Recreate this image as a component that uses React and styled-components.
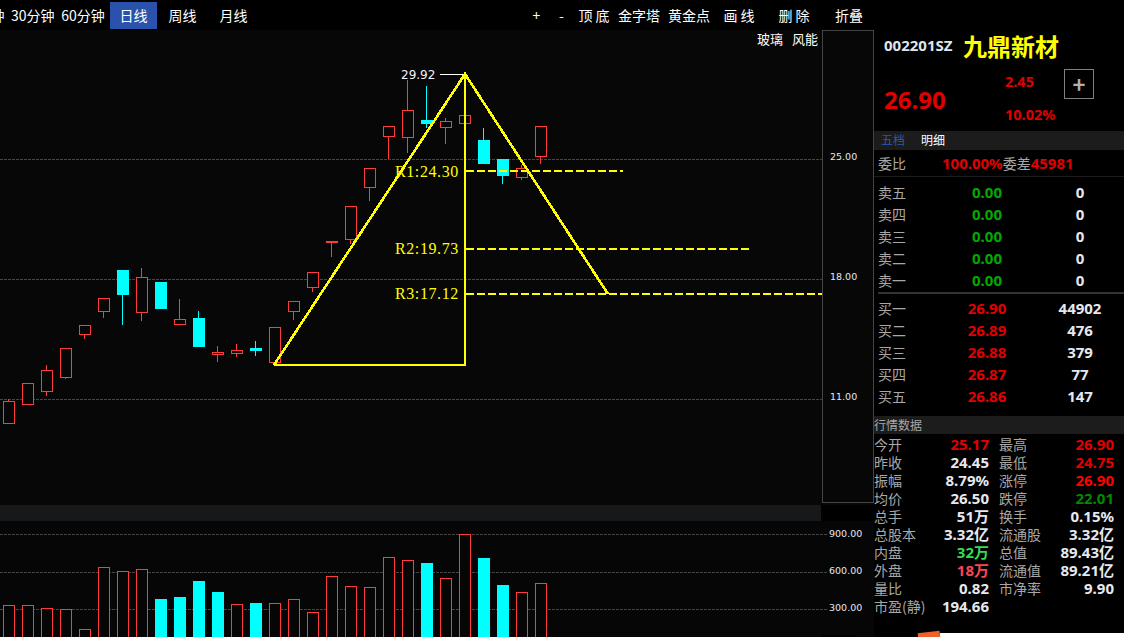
import styled, { createGlobalStyle } from "styled-components";

const RED = "#ff3b3b";
const CYAN = "#00ffff";
const YELLOW = "#ffff00";

// [up, bodyTop, bodyBottom, wickTop, wickBottom]
const candles = [
  [1, 401, 424, 399, 424],
  [1, 383, 405, 383, 405],
  [1, 370, 392, 365, 396],
  [1, 348, 378, 348, 379],
  [1, 325, 335, 325, 339],
  [1, 298, 312, 298, 318],
  [0, 270, 295, 270, 325],
  [1, 277, 313, 268, 321],
  [0, 282, 309, 282, 309],
  [1, 319, 325, 299, 325],
  [0, 318, 347, 311, 347],
  [1, 352, 355, 346, 362],
  [1, 350, 354, 344, 357],
  [0, 348, 351, 341, 356],
  [1, 327, 363, 327, 363],
  [1, 301, 312, 301, 320],
  [1, 272, 288, 272, 292],
  [1, 241, 243, 241, 257],
  [1, 206, 240, 206, 244],
  [1, 168, 188, 168, 201],
  [1, 126, 137, 126, 159],
  [1, 110, 138, 80, 153],
  [0, 120, 124, 86, 128],
  [1, 121, 128, 118, 144],
  [1, 115, 124, 115, 124],
  [0, 140, 164, 128, 164],
  [0, 159, 176, 159, 184],
  [1, 168, 178, 165, 180],
  [1, 126, 157, 126, 164],
];

// [up, top]
const volumes = [
  [1, 605], [1, 605], [1, 608], [1, 609], [1, 629], [1, 567], [1, 571], [1, 569],
  [0, 599], [0, 597], [0, 581], [0, 592], [1, 604], [0, 603], [1, 603], [1, 599],
  [1, 612], [1, 576], [1, 586], [1, 587], [1, 557], [1, 560], [0, 563], [1, 578],
  [1, 534], [0, 558], [0, 585], [1, 592], [1, 583],
];

const leftTools = [
  ["15分钟", 43, 7],
  ["30分钟", 43, 7],
  ["60分钟", 44, 5],
];
const rangeTools = [
  ["日线", 47, true],
  ["周线", 51],
  ["月线", 51],
];
const rightTools = [
  ["+", 25],
  ["-", 25],
  ["顶 底", 40],
  ["金字塔", 50],
  ["黄金点", 50],
  ["画 线", 50],
  ["删 除", 60],
  ["折叠", 50],
];

const asks = [["卖五"], ["卖四"], ["卖三"], ["卖二"], ["卖一"]];
const bids = [
  ["买一", "26.90", "44902"],
  ["买二", "26.89", "476"],
  ["买三", "26.88", "379"],
  ["买四", "26.87", "77"],
  ["买五", "26.86", "147"],
];

const W = "#e6e8f0";
const DR = "#e00000";
const stats = [
  ["今开", "25.17", DR, "最高", "26.90", DR],
  ["昨收", "24.45", W, "最低", "24.75", DR],
  ["振幅", "8.79%", W, "涨停", "26.90", "#ff0000"],
  ["均价", "26.50", W, "跌停", "22.01", "#008a00"],
  ["总手", "51万", W, "换手", "0.15%", W],
  ["总股本", "3.32亿", W, "流通股", "3.32亿", W],
  ["内盘", "32万", "#33dd55", "总值", "89.43亿", W],
  ["外盘", "18万", "#ff4455", "流通值", "89.21亿", W],
  ["量比", "0.82", W, "市净率", "9.90", W],
  ["市盈(静)", "194.66", W],
];

export default function App() {
  return (
    <>
      <GlobalStyle />
      <Page>
        <Main>
          <Toolbar>
            <ToolGroup>
              {leftTools.map(([label, w, gap], i) => (
                <ToolItem key={label} $w={w} $gap={gap} $first={i === 0}>{label}</ToolItem>
              ))}
              {rangeTools.map(([label, w, active]) => (
                <ToolItem key={label} $w={w} $active={active}>{label}</ToolItem>
              ))}
            </ToolGroup>
            <ToolGroup>
              {rightTools.map(([label, w]) => (
                <ToolItem key={label} $w={w}>{label}</ToolItem>
              ))}
            </ToolGroup>
          </Toolbar>

          <ChartRow>
            <Chart>
              <svg width="822" height="475" viewBox="0 30 822 475">
                {[159.5, 279.5, 399.5].map((y) => (
                  <line key={y} x1="0" x2="822" y1={y} y2={y} stroke="#444" strokeDasharray="3 1" />
                ))}
                {candles.map(([up, top, bottom, wickTop, wickBottom], i) => {
                  const x = 8.5 + 19 * i;
                  const color = up ? RED : CYAN;
                  return (
                    <g key={i}>
                      <line x1={x} x2={x} y1={wickTop} y2={wickBottom} stroke={color} />
                      {up ? (
                        <rect x={x - 5} y={top + 0.5} width="11" height={bottom - top - 1} fill="#070707" stroke={color} />
                      ) : (
                        <rect x={x - 5.5} y={top} width="12" height={bottom - top} fill={color} />
                      )}
                    </g>
                  );
                })}
                <line x1="440" x2="465" y1="74.5" y2="74.5" stroke="#fff" />
                <PriceMark x="401" y="79">29.92</PriceMark>
                <g stroke={YELLOW} fill="none" shapeRendering="crispEdges">
                  <path d="M274 365 L465 74 L608 294" strokeWidth="2.6" />
                  <path d="M274 365 H465 V74" strokeWidth="2" />
                  <path d="M466 171 H623 M466 249 H751 M466 294 H822" strokeWidth="2" strokeDasharray="8 3" />
                </g>
                <LevelText x="395" y="177">R1:24.30</LevelText>
                <LevelText x="395" y="254">R2:19.73</LevelText>
                <LevelText x="395" y="299">R3:17.12</LevelText>
              </svg>
              <Tags>
                <span>玻璃</span>
                <span>风能</span>
              </Tags>
            </Chart>
            <AxisBox>
              <AxisLabel $top={120}>25.00</AxisLabel>
              <AxisLabel $top={240}>18.00</AxisLabel>
              <AxisLabel $top={360}>11.00</AxisLabel>
            </AxisBox>
          </ChartRow>

          <Strip />

          <VolumePane>
            <svg width="874" height="116" viewBox="0 521 874 116">
              {[534.5, 572.5, 609.5].map((y) => (
                <line key={y} x1="0" x2="828" y1={y} y2={y} stroke="#444" strokeDasharray="3 1" />
              ))}
              {volumes.map(([up, top], i) => {
                const x = 8.5 + 19 * i;
                return up ? (
                  <rect key={i} x={x - 5} y={top + 0.5} width="11" height={660 - top} fill="#060606" stroke={RED} />
                ) : (
                  <rect key={i} x={x - 5.5} y={top} width="12" height={660 - top} fill={CYAN} />
                );
              })}
              <AxisText x="829" y="537">900.00</AxisText>
              <AxisText x="829" y="574">600.00</AxisText>
              <AxisText x="829" y="611">300.00</AxisText>
              <rect x="822" y="635" width="34" height="2" fill="#000" />
              <AxisText x="829" y="643.5">100%</AxisText>
            </svg>
          </VolumePane>
        </Main>

        <Side>
          <Header>
            <TitleRow>
              <Code>002201SZ</Code>
              <Name>九鼎新材</Name>
            </TitleRow>
            <QuoteRow>
              <Price>26.90</Price>
              <Change>
                <span>2.45</span>
                <span>10.02%</span>
              </Change>
              <PlusButton>+</PlusButton>
            </QuoteRow>
          </Header>

          <TabBar>
            <Tab $active>五档</Tab>
            <Tab>明细</Tab>
          </TabBar>

          <RatioRow>
            <Label>委比</Label>
            <RatioValue>100.00%</RatioValue>
            <Label>委差</Label>
            <RatioValue>45981</RatioValue>
          </RatioRow>

          <Book>
            {asks.map(([label]) => (
              <BookRow key={label}>
                <Label>{label}</Label>
                <Num $color="#00a800">0.00</Num>
                <Num $color={W}>0</Num>
              </BookRow>
            ))}
          </Book>

          <Book $divided>
            {bids.map(([label, price, vol]) => (
              <BookRow key={label}>
                <Label>{label}</Label>
                <Num $color={DR}>{price}</Num>
                <Num $color={W}>{vol}</Num>
              </BookRow>
            ))}
          </Book>

          <SectionBar>行情数据</SectionBar>

          <StatList>
            {stats.map(([a, av, ac, b, bv, bc]) => (
              <StatRow key={a}>
                <Stat>
                  <Label>{a}</Label>
                  <StatValue $color={ac}>{av}</StatValue>
                </Stat>
                {b && (
                  <Stat>
                    <Label>{b}</Label>
                    <StatValue $color={bc}>{bv}</StatValue>
                  </Stat>
                )}
              </StatRow>
            ))}
          </StatList>

          <AdEdge />
        </Side>
      </Page>
    </>
  );
}

const GlobalStyle = createGlobalStyle`
  html, body {
    margin: 0;
    padding: 0;
    background: #000;
  }
  * {
    box-sizing: border-box;
  }
  svg {
    display: block;
  }
`;

const CJK = `"Noto Sans CJK SC", "Noto Sans", sans-serif`;
const NUM = `"Noto Sans", "Noto Sans CJK SC", sans-serif`;

const Page = styled.div`
  display: flex;
  width: 1124px;
  height: 637px;
  overflow: hidden;
  font-family: ${CJK};
  background: #000;
`;

const Main = styled.div`
  width: 874px;
  display: flex;
  flex-direction: column;
  overflow: hidden;
`;

const Toolbar = styled.div`
  height: 30px;
  flex: none;
  display: flex;
  justify-content: space-between;
  background: #000;
`;

const ToolGroup = styled.div`
  display: flex;
  height: 27px;
  margin-top: 2px;
`;

const ToolItem = styled.div`
  flex: none;
  width: ${(p) => p.$w}px;
  margin-left: ${(p) => (p.$first ? "-39px" : 0)};
  margin-right: ${(p) => p.$gap || 0}px;
  line-height: 27px;
  text-align: center;
  white-space: nowrap;
  font-size: 14px;
  color: #fff;
  background: ${(p) => (p.$active ? "#2a52ad" : "transparent")};
`;

const ChartRow = styled.div`
  display: flex;
  height: 475px;
  flex: none;
  background: #070707;
`;

const Chart = styled.div`
  position: relative;
  width: 822px;
  flex: none;
`;

const Tags = styled.div`
  position: absolute;
  top: 0;
  right: 4px;
  display: flex;
  gap: 9px;
  font-size: 13px;
  line-height: 18px;
  color: #fff;
`;

const AxisBox = styled.div`
  position: relative;
  width: 52px;
  height: 473px;
  border: 1px solid #444;
`;

const AxisLabel = styled.span`
  position: absolute;
  left: 7px;
  top: ${(p) => p.$top}px;
  font-family: "DejaVu Sans", sans-serif;
  font-size: 9.5px;
  line-height: 12px;
  color: #e6e8f0;
`;

const PriceMark = styled.text`
  font-family: "DejaVu Sans", sans-serif;
  font-size: 12px;
  fill: #eef2ff;
`;

const LevelText = styled.text`
  font-family: "Liberation Serif", serif;
  font-size: 16px;
  letter-spacing: 0.6px;
  fill: ${YELLOW};
`;

const AxisText = styled.text`
  font-family: "DejaVu Sans", sans-serif;
  font-size: 9.5px;
  fill: #e6e8f0;
`;

const Strip = styled.div`
  height: 16px;
  flex: none;
  width: 821px;
  background: #16181a;
`;

const VolumePane = styled.div`
  height: 116px;
  flex: none;
  background: #060606;
`;

const Side = styled.div`
  width: 250px;
  flex: none;
  background: #000;
`;

const Header = styled.div`
  height: 131px;
  padding-top: 27px;
`;

const TitleRow = styled.div`
  display: flex;
  align-items: center;
  height: 36px;
  padding-left: 10px;
`;

const Code = styled.span`
  width: 79px;
  font-family: ${NUM};
  font-size: 15px;
  font-weight: 700;
  color: #dfe4ee;
`;

const Name = styled.span`
  font-size: 24px;
  font-weight: 700;
  color: ${YELLOW};
`;

const QuoteRow = styled.div`
  display: flex;
  padding-left: 10px;
  height: 68px;
`;

const Price = styled.span`
  width: 121px;
  padding-top: 20px;
  font-family: ${NUM};
  font-size: 24px;
  font-weight: 700;
  line-height: 34px;
  color: ${DR};
`;

const Change = styled.div`
  width: 59px;
  padding-top: 8px;
  display: flex;
  flex-direction: column;
  gap: 13px;
  font-family: ${NUM};
  font-size: 14.5px;
  font-weight: 700;
  line-height: 20px;
  color: ${DR};
`;

const PlusButton = styled.div`
  width: 30px;
  height: 30px;
  margin-top: 6px;
  border: 1px solid #808080;
  text-align: center;
  line-height: 26px;
  font-size: 22px;
  font-weight: 700;
  color: #b0b0b0;
`;

const TabBar = styled.div`
  display: flex;
  gap: 16px;
  height: 19px;
  padding-left: 7px;
  background: #1c1c1c;
`;

const Tab = styled.span`
  font-size: 12px;
  line-height: 18px;
  color: ${(p) => (p.$active ? "#2f55b0" : "#fff")};
`;

const Label = styled.span`
  font-size: 14px;
  line-height: 18px;
  color: #a8a8a8;
  white-space: nowrap;
`;

const RatioRow = styled.div`
  display: flex;
  align-items: center;
  height: 27px;
  padding-left: 4px;
  border-bottom: 1px solid #1c1c1c;
  ${Label}:first-child {
    width: 64px;
  }
`;

const RatioValue = styled.span`
  font-family: ${NUM};
  font-size: 15px;
  font-weight: 700;
  color: ${DR};
`;

const Book = styled.div`
  padding: ${(p) => (p.$divided ? "3px 0 9px" : "4px 0 0")};
  margin-left: 4px;
  border-top: ${(p) => (p.$divided ? "2px solid #333" : "none")};
  margin-top: ${(p) => (p.$divided ? "1px" : 0)};
`;

const BookRow = styled.div`
  display: grid;
  grid-template-columns: 60px 98px 88px;
  height: 22px;
  align-items: center;
`;

const Num = styled.span`
  text-align: center;
  font-family: ${NUM};
  font-size: 15px;
  font-weight: 700;
  color: ${(p) => p.$color};
`;

const SectionBar = styled.div`
  height: 18px;
  font-size: 12px;
  line-height: 18px;
  color: #a8a8a8;
  background: #1c1c1c;
`;

const StatList = styled.div`
  padding-top: 1px;
`;

const StatRow = styled.div`
  display: grid;
  grid-template-columns: 115px 115px;
  column-gap: 10px;
  height: 18px;
  overflow: hidden;
`;

const Stat = styled.div`
  display: flex;
  justify-content: space-between;
  height: 18px;
`;

const StatValue = styled.span`
  font-family: ${NUM};
  font-size: 15px;
  font-weight: 700;
  line-height: 18px;
  color: ${(p) => p.$color};
`;

const AdEdge = styled.div`
  position: relative;
  height: 6px;
  margin: 18px 0 0 66px;
  background: #fff;
  &::before {
    content: "";
    position: absolute;
    left: -22px;
    top: -1px;
    width: 22px;
    height: 8px;
    background: #f0602a;
    transform: rotate(-6deg);
  }
`;
